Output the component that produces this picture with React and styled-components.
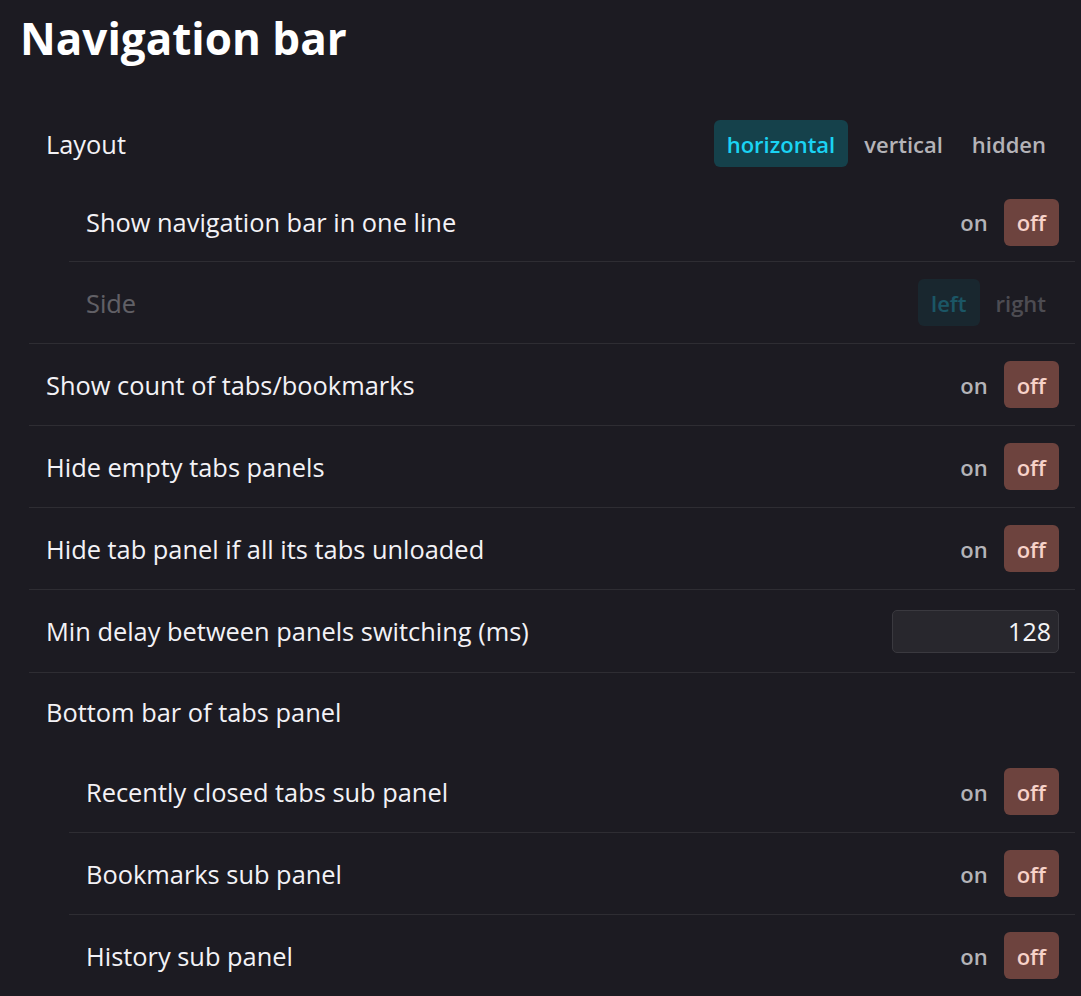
import styled, { createGlobalStyle } from "styled-components";

const Global = createGlobalStyle`
  html, body {
    margin: 0;
    padding: 0;
    background: #1c1b22;
  }
  body {
    font-family: "Open Sans", "Noto Sans", sans-serif;
    color: #f3f2f6;
  }
`;

const Page = styled.div`
  width: 1081px;
  min-height: 996px;
  background: #1c1b22;
  overflow: hidden;
`;

const Title = styled.h1`
  margin: 0;
  height: 104px;
  padding: 8px 0 0 20px;
  box-sizing: border-box;
  font-size: 44px;
  line-height: 60px;
  font-weight: 700;
  color: #ffffff;
`;

const Section = styled.div`
  margin: 0 6px 0 29px;
`;

const Block = styled.div`
  & + & {
    border-top: 1px solid #2e2d33;
  }
`;

const SubList = styled.div`
  margin-left: 40px;
  & > * + * {
    border-top: 1px solid #2e2d33;
  }
`;

const Row = styled.div`
  display: flex;
  align-items: center;
  justify-content: space-between;
  height: ${(p) => p.$h || 81}px;
  padding: 0 16px 0 17px;
  & > * {
    opacity: ${(p) => (p.$disabled ? 0.32 : 1)};
  }
`;

const Label = styled.span`
  font-size: 25.4px;
  color: #f3f2f6;
`;

const Group = styled.div`
  display: flex;
  gap: 3px;
`;

const Opt = styled.button`
  border: none;
  outline: none;
  font-family: inherit;
  font-size: 22px;
  font-weight: 600;
  height: 47px;
  padding: 0 13px;
  border-radius: 6px;
  background: ${(p) =>
    p.$active ? (p.$tone === "off" ? "#6d433e" : "#15414b") : "transparent"};
  color: ${(p) =>
    p.$active ? (p.$tone === "off" ? "#f7d2c9" : "#1ad3f3") : "#b4b3b8"};
`;

const NumInput = styled.input`
  width: 167px;
  height: 43px;
  box-sizing: border-box;
  background: #28272d;
  border: 1px solid #3a393f;
  border-radius: 5px;
  color: #f4f4f6;
  font-family: inherit;
  font-size: 25px;
  text-align: right;
  padding: 0 7px;
  outline: none;
`;

const Choice = ({ options, value }) => (
  <Group>
    {options.map((o) => (
      <Opt key={o} $active={o === value} $tone={o === "off" ? "off" : "on"}>
        {o}
      </Opt>
    ))}
  </Group>
);

const Toggle = () => <Choice options={["on", "off"]} value="off" />;

export default function App() {
  return (
    <Page>
      <Global />
      <Title>Navigation bar</Title>
      <Section>
        <Block>
          <Row $h={79}>
            <Label>Layout</Label>
            <Choice options={["horizontal", "vertical", "hidden"]} value="horizontal" />
          </Row>
          <SubList>
            <Row $h={78}>
              <Label>Show navigation bar in one line</Label>
              <Toggle />
            </Row>
            <Row $disabled>
              <Label>Side</Label>
              <Choice options={["left", "right"]} value="left" />
            </Row>
          </SubList>
        </Block>
        <Block>
          <Row>
            <Label>Show count of tabs/bookmarks</Label>
            <Toggle />
          </Row>
        </Block>
        <Block>
          <Row>
            <Label>Hide empty tabs panels</Label>
            <Toggle />
          </Row>
        </Block>
        <Block>
          <Row>
            <Label>Hide tab panel if all its tabs unloaded</Label>
            <Toggle />
          </Row>
        </Block>
        <Block>
          <Row $h={82}>
            <Label>Min delay between panels switching (ms)</Label>
            <NumInput defaultValue="128" />
          </Row>
        </Block>
        <Block>
          <Row $h={78}>
            <Label>Bottom bar of tabs panel</Label>
          </Row>
          <SubList>
            <Row>
              <Label>Recently closed tabs sub panel</Label>
              <Toggle />
            </Row>
            <Row>
              <Label>Bookmarks sub panel</Label>
              <Toggle />
            </Row>
            <Row>
              <Label>History sub panel</Label>
              <Toggle />
            </Row>
          </SubList>
        </Block>
      </Section>
    </Page>
  );
}
